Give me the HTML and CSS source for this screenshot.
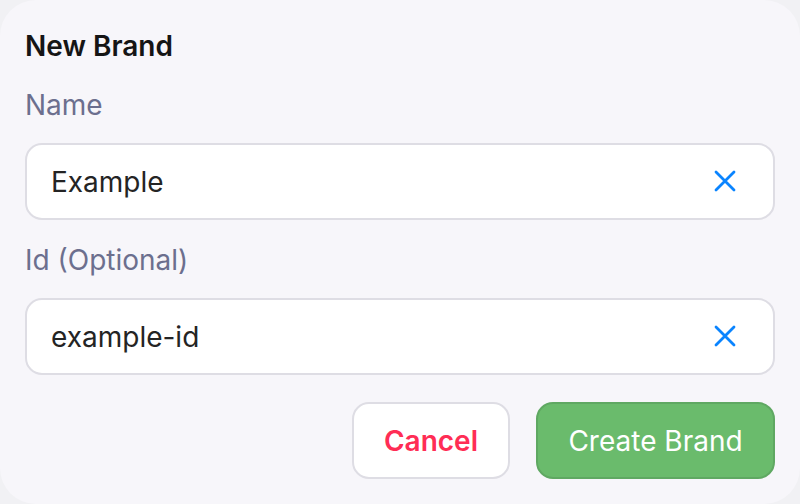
FILE: index.html
```html
<!DOCTYPE html>
<html>
<head>
<meta charset="utf-8">
<link rel="stylesheet" href="styles.css">
</head>
<body>
<div class="card">
  <div class="title">New Brand</div>
  <div class="label">Name</div>
  <div class="input">
    <span class="value">Example</span>
    <svg class="clear" width="22" height="22" viewBox="0 0 22 22"><path d="M2 2 L20 20 M20 2 L2 20" stroke="#0a84ff" stroke-width="2.8" stroke-linecap="round" fill="none"/></svg>
  </div>
  <div class="label label2">Id (Optional)</div>
  <div class="input">
    <span class="value">example-id</span>
    <svg class="clear" width="22" height="22" viewBox="0 0 22 22"><path d="M2 2 L20 20 M20 2 L2 20" stroke="#0a84ff" stroke-width="2.8" stroke-linecap="round" fill="none"/></svg>
  </div>
  <div class="actions">
    <div class="btn cancel">Cancel</div>
    <div class="btn create">Create Brand</div>
  </div>
</div>
</body>
</html>
```
FILE: styles.css
```css
html, body {
  margin: 0;
  padding: 0;
  width: 800px;
  height: 504px;
  background: #f1f1f4;
  overflow: hidden;
}
.card {
  box-sizing: border-box;
  width: 800px;
  height: 504px;
  background: #f7f6fa;
  border-radius: 36px;
  padding: 29px 25px 25px;
  font-family: Inter, "Noto Sans", sans-serif;
  font-size: 28px;
  line-height: 34px;
}
.title {
  font-weight: 600;
  color: #151515;
  height: 34px;
}
.label {
  margin-top: 25px;
  color: #6c6f8e;
  height: 34px;
}
.label2 {
  margin-top: 23px;
}
.input {
  box-sizing: border-box;
  margin-top: 21px;
  height: 77px;
  background: #ffffff;
  border: 2px solid #dedde4;
  border-radius: 17px;
  display: flex;
  align-items: center;
  justify-content: space-between;
  padding: 0 37px 0 24px;
  color: #242424;
}
.value {
  display: block;
}
.clear {
  display: block;
  margin-top: -2px;
}
.actions {
  margin-top: 27px;
  display: flex;
  justify-content: flex-end;
  gap: 26px;
}
.btn {
  box-sizing: border-box;
  height: 77px;
  border-radius: 17px;
  border: 2px solid;
  display: flex;
  align-items: center;
  justify-content: center;
}
.cancel {
  width: 158px;
  background: #ffffff;
  border-color: #dedde4;
  color: #ff2d55;
  font-weight: 600;
}
.create {
  width: 239px;
  background: #6abb6c;
  border-color: #5fa862;
  color: #ffffff;
}
```
